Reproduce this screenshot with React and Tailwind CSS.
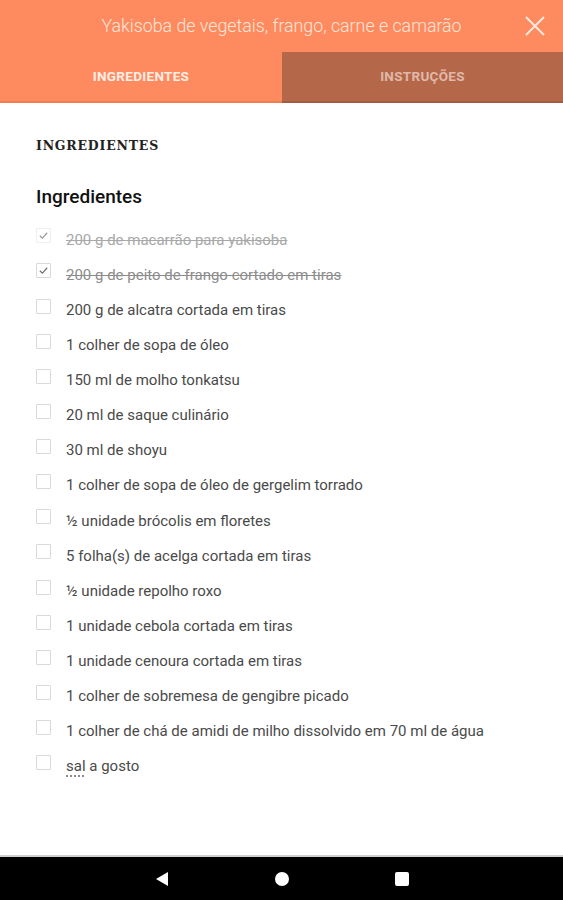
const items = [
  { text: '200 g de macarrão para yakisoba', done: true, faint: true },
  { text: '200 g de peito de frango cortado em tiras', done: true },
  { text: '200 g de alcatra cortada em tiras' },
  { text: '1 colher de sopa de óleo' },
  { text: '150 ml de molho tonkatsu' },
  { text: '20 ml de saque culinário' },
  { text: '30 ml de shoyu' },
  { text: '1 colher de sopa de óleo de gergelim torrado' },
  { text: '½ unidade brócolis em floretes' },
  { text: '5 folha(s) de acelga cortada em tiras' },
  { text: '½ unidade repolho roxo' },
  { text: '1 unidade cebola cortada em tiras' },
  { text: '1 unidade cenoura cortada em tiras' },
  { text: '1 colher de sobremesa de gengibre picado' },
  { text: '1 colher de chá de amidi de milho dissolvido em 70 ml de água' },
  { text: 'sal a gosto', dotted: true },
]

function Check({ done, faint }) {
  return (
    <div className={`w-[15px] h-[15px] border ${faint ? 'border-[#eee]' : 'border-[#d9d9d9]'} rounded-[1px] flex items-center justify-center shrink-0`}>
      {done && (
        <svg width="11" height="11" viewBox="0 0 12 12">
          <path d="M2 6.3 L4.8 9 L10 3" fill="none" stroke={faint ? '#9a9a9a' : '#707070'} strokeWidth="1.3" />
        </svg>
      )}
    </div>
  )
}

export default function App() {
  return (
    <div className="w-[563px] h-[900px] bg-white flex flex-col overflow-hidden" style={{ fontFamily: 'Roboto, "Liberation Sans", sans-serif' }}>
      <div className="bg-[#fd8b5f] shrink-0">
        <div className="h-[52px] flex items-center justify-center relative">
          <div className="text-[#fde5da] text-[17.8px] font-light">Yakisoba de vegetais, frango, carne e camarão</div>
          <button className="absolute right-[18px] top-[16px]">
            <svg width="20" height="20" viewBox="0 0 20 20">
              <path d="M1 1 L19 19 M19 1 L1 19" stroke="#fde8df" strokeWidth="2" />
            </svg>
          </button>
        </div>
        <div className="flex h-[51px]">
          <div className="w-[282px] flex items-center justify-center text-[13.5px] font-bold text-[#fdeee6] tracking-[0.3px] border-b-[2px] border-[#f07c52]">INGREDIENTES</div>
          <div className="flex-1 bg-[#b5674a] flex items-center justify-center text-[13.5px] font-bold text-[#e0b9a8] tracking-[0.3px] border-b-[2px] border-[#a65b40]">INSTRUÇÕES</div>
        </div>
      </div>

      <div className="flex-1 px-[36px]">
        <div className="mt-[34px] text-[12.5px] font-bold text-[#222] tracking-[0.8px]" style={{ fontFamily: '"DejaVu Serif", "Liberation Serif", serif' }}>INGREDIENTES</div>
        <div className="mt-[27px] text-[19px] font-medium text-[#111]">Ingredientes</div>
        <ul className="mt-[11px]">
          {items.map((it, i) => (
            <li key={i} className="h-[35.13px] flex items-center gap-[15px]">
              <div className="-mt-[8px]"><Check done={it.done} faint={it.faint} /></div>
              <span className={`text-[15px] ${it.done ? `line-through ${it.faint ? 'text-[#a8a8a8]' : 'text-[#8c8c8c]'}` : 'text-[#4a4a4a]'}`}>
                {it.dotted ? (<><span className="underline decoration-dotted decoration-[#666] underline-offset-[4px]">sal</span> a gosto</>) : it.text}
              </span>
            </li>
          ))}
        </ul>
      </div>

      <div className="h-[45px] shrink-0 bg-black border-t-[2px] border-[#cfcfcf] flex items-center justify-center gap-[106px]">
        <svg width="14" height="16" viewBox="0 0 14 16"><path d="M13 1 L13 15 L1 8 Z" fill="#fff" /></svg>
        <div className="w-[14px] h-[14px] rounded-full bg-white" />
        <div className="w-[14px] h-[14px] rounded-[2px] bg-white" />
      </div>
    </div>
  )
}
